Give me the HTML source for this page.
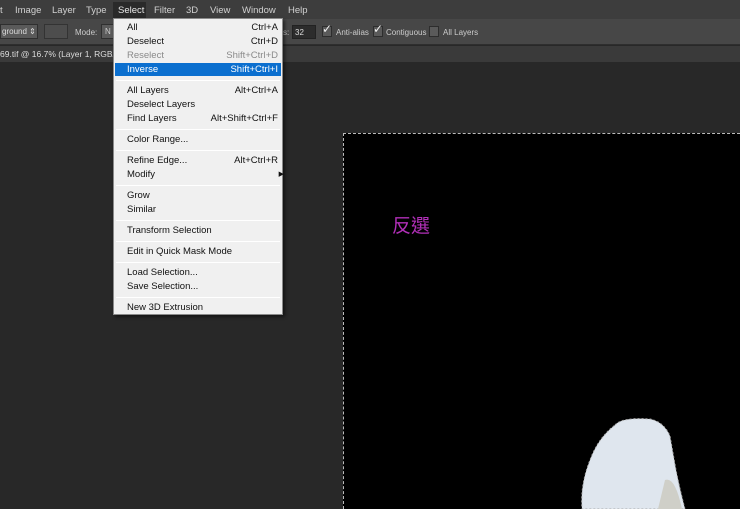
<!DOCTYPE html>
<html><head><meta charset="utf-8"><style>
*{margin:0;padding:0;box-sizing:border-box}
body{width:740px;height:509px;overflow:hidden;background:#282828;font-family:"Liberation Sans",sans-serif;position:relative}
.mb{position:absolute;left:0;top:0;width:740px;height:19px;background:#3d3d3d;color:#d0d0d0;font-size:9.5px}
.mb span{position:absolute;top:5px}
.ob{position:absolute;left:0;top:19px;width:740px;height:26px;background:#474747;border-bottom:1px solid #2e2e2e;color:#ccc;font-size:8px}
.tab{position:absolute;left:0;top:46px;width:740px;height:16px;background:#3a3a3a;color:#ddd;font-size:8.5px;padding:3px 0 0 0}
.menu{position:absolute;left:113px;top:18px;width:170px;height:297px;background:#f0f0f0;border:1px solid #8a8a8a;box-shadow:2px 2px 3px rgba(0,0,0,.5);font-size:9.5px;color:#111}
.it{position:absolute;left:13px;width:151px;height:14px;line-height:14px;margin-top:1px}
.it b{font-weight:normal;position:absolute;right:0;top:0}
.dis{color:#8a8a8a}
.hl{position:absolute;left:1px;top:44px;width:166px;height:13px;background:#0b6fcf}
.sep{position:absolute;left:2px;width:164px;height:1px;background:#cfcfcf;border-bottom:1px solid #fff}
.cb{position:absolute;top:7px;width:10px;height:11px;background:#5a5a5a;border:1px solid #2d2d2d}
.ck{position:absolute;top:3px;color:#eee;font-size:12px}
</style></head><body>
<div class="mb">
<span style="left:0">t</span><span style="left:15px">Image</span><span style="left:52px">Layer</span><span style="left:86px">Type</span>
<span style="left:113px;top:2px;width:33px;height:17px;background:#2a2a2a"></span><span style="left:118px;color:#e8e8e8">Select</span>
<span style="left:154px">Filter</span><span style="left:186px">3D</span><span style="left:210px">View</span><span style="left:242px">Window</span><span style="left:288px">Help</span>
</div>
<div class="ob">
<div style="position:absolute;left:0;top:5px;width:38px;height:15px;background:#5a5a5a;border:1px solid #2f2f2f;color:#ddd;padding:2px 0 0 1px">ground ⇕</div>
<div style="position:absolute;left:44px;top:5px;width:24px;height:15px;background:#4d4d4d;border:1px solid #333"></div>
<div style="position:absolute;left:75px;top:9px">Mode:</div>
<div style="position:absolute;left:101px;top:5px;width:14px;height:15px;background:#5a5a5a;border:1px solid #2f2f2f;padding:2px 0 0 3px">N</div>
<div style="position:absolute;left:283px;top:9px">s:</div>
<div style="position:absolute;left:292px;top:6px;width:24px;height:14px;background:#2c2c2c;border:1px solid #222;color:#ddd;padding:2px 0 0 2px">32</div>
<div class="cb" style="left:322px"></div><div class="ck" style="left:322px">✓</div>
<div style="position:absolute;left:336px;top:9px">Anti-alias</div>
<div class="cb" style="left:373px"></div><div class="ck" style="left:373px">✓</div>
<div style="position:absolute;left:386px;top:9px">Contiguous</div>
<div class="cb" style="left:429px"></div>
<div style="position:absolute;left:443px;top:9px">All Layers</div>
</div>
<div class="tab">69.tif @ 16.7% (Layer 1, RGB/8</div>
<div style="position:absolute;left:343px;top:133px;width:397px;height:376px;background:#000;border-left:1px dashed #bbb;border-top:1px dashed #bbb"></div>
<div style="position:absolute;left:392px;top:211px;color:#b12fb8;font-size:19px;font-family:'Noto Sans CJK TC',sans-serif">反選</div>
<svg style="position:absolute;left:560px;top:400px" width="180" height="109">
<path d="M55 25 Q62 17 90 19 Q104 22 110 36 L116 70 Q120 90 125 109 L22 109 Q20 85 30 60 Q38 38 55 25Z" fill="#dfe6ee" stroke="#aaa" stroke-dasharray="2 2" stroke-width="1"/>
<path d="M105 80 Q115 76 122 109 L98 109Z" fill="#cfcfc8"/>
</svg>
<div class="menu">
<div class="hl"></div>
<div class="it" style="top:1px">All<b>Ctrl+A</b></div>
<div class="it" style="top:15px">Deselect<b>Ctrl+D</b></div>
<div class="it dis" style="top:29px">Reselect<b>Shift+Ctrl+D</b></div>
<div class="it" style="top:43px;color:#fff">Inverse<b>Shift+Ctrl+I</b></div>
<div class="sep" style="top:61px"></div>
<div class="it" style="top:64px">All Layers<b>Alt+Ctrl+A</b></div>
<div class="it" style="top:78px">Deselect Layers</div>
<div class="it" style="top:92px">Find Layers<b>Alt+Shift+Ctrl+F</b></div>
<div class="sep" style="top:110px"></div>
<div class="it" style="top:113px">Color Range...</div>
<div class="sep" style="top:131px"></div>
<div class="it" style="top:134px">Refine Edge...<b>Alt+Ctrl+R</b></div>
<div class="it" style="top:148px">Modify<b style="font-size:7px;right:-6px">▶</b></div>
<div class="sep" style="top:166px"></div>
<div class="it" style="top:169px">Grow</div>
<div class="it" style="top:183px">Similar</div>
<div class="sep" style="top:201px"></div>
<div class="it" style="top:204px">Transform Selection</div>
<div class="sep" style="top:222px"></div>
<div class="it" style="top:225px">Edit in Quick Mask Mode</div>
<div class="sep" style="top:243px"></div>
<div class="it" style="top:246px">Load Selection...</div>
<div class="it" style="top:260px">Save Selection...</div>
<div class="sep" style="top:278px"></div>
<div class="it" style="top:281px">New 3D Extrusion</div>
</div>
</body></html>
